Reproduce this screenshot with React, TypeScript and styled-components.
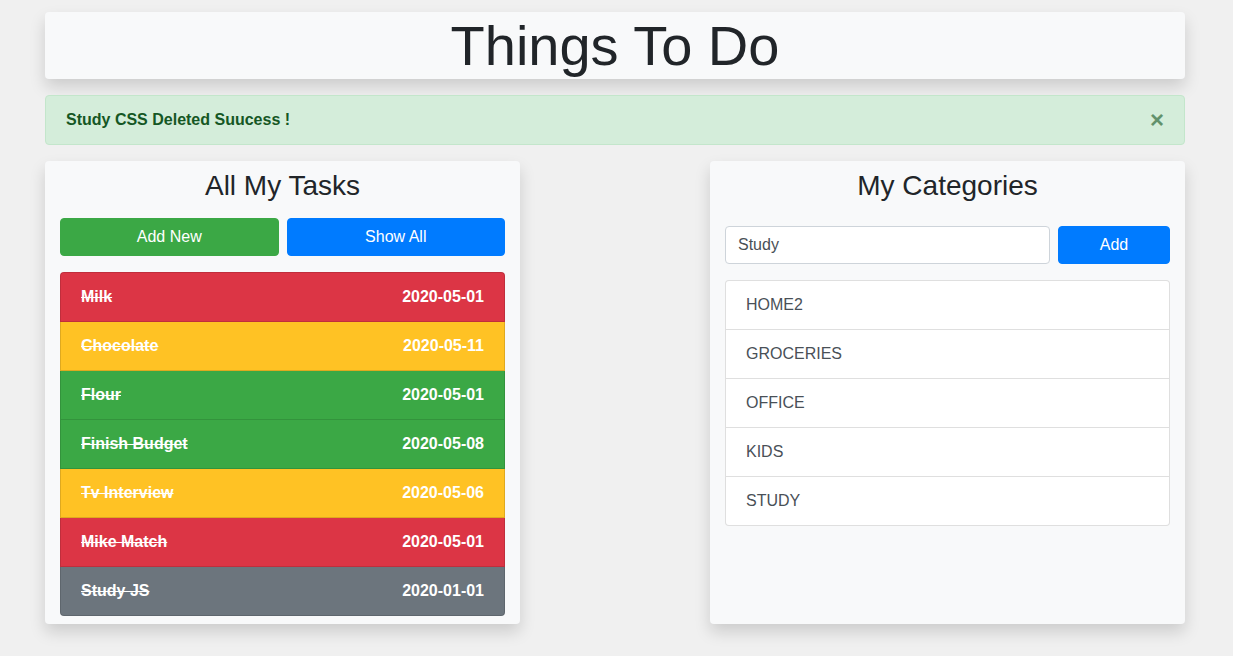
import * as React from 'react';
import styled, { createGlobalStyle } from 'styled-components';

const GlobalStyle = createGlobalStyle`
    * {
        box-sizing: border-box;
    }

    body {
        margin: 0;
        background: #f0f0f0;
        font-family: "Liberation Sans", Arial, Helvetica, sans-serif;
        font-size: 16px;
        line-height: 1.5;
        color: #212529;
    }
`;

const Page = styled.div`
    width: 1140px;
    margin: 12px 0 32px 45px;
    display: flex;
    flex-direction: column;
    gap: 16px;
`;

const Header = styled.header`
    background: #f8f9fa;
    border-radius: 4px;
    box-shadow: 0 8px 16px rgba(0, 0, 0, 0.15);
`;

const Title = styled.h1`
    margin: 0;
    font-size: 56px;
    font-weight: 400;
    line-height: 1.2;
    text-align: center;
`;

const Alert = styled.div`
    position: relative;
    padding: 12px 64px 12px 20px;
    background: #d4edda;
    border: 1px solid #c3e6cb;
    border-radius: 4px;
    color: #155724;
    font-weight: 700;
`;

const Close = styled.button`
    position: absolute;
    top: 0;
    right: 0;
    padding: 12px 20px;
    border: 0;
    background: transparent;
    font-family: inherit;
    font-size: 24px;
    font-weight: 700;
    line-height: 1;
    color: #155724;
    opacity: 0.6;
    cursor: pointer;
`;

const Columns = styled.div`
    display: flex;
    justify-content: space-between;
    align-items: stretch;
`;

const Card = styled.section`
    width: 475px;
    min-height: 463px;
    padding: 8px 15px;
    background: #f8f9fa;
    border-radius: 4px;
    box-shadow: 0 8px 16px rgba(0, 0, 0, 0.15);
    display: flex;
    flex-direction: column;
`;

const CardTitle = styled.h3<{ $gap: number }>`
    margin: 0 0 ${(p) => p.$gap}px;
    font-size: 28px;
    font-weight: 400;
    line-height: 1.2;
    text-align: center;
`;

const ButtonRow = styled.div`
    display: flex;
    gap: 8px;
    margin-bottom: 16px;
`;

const Button = styled.button<{ $color: string; $width?: number }>`
    flex: ${(p) => (p.$width ? `0 0 ${p.$width}px` : '1')};
    height: 38px;
    padding: 6px 12px;
    border: 1px solid ${(p) => p.$color};
    border-radius: 4px;
    background: ${(p) => p.$color};
    color: #fff;
    font-family: inherit;
    font-size: 16px;
    line-height: 1.5;
    cursor: pointer;
`;

const List = styled.ul`
    margin: 0;
    padding: 0;
    list-style: none;
    display: flex;
    flex-direction: column;
`;

const TaskItem = styled.li<{ $bg: string }>`
    display: flex;
    justify-content: space-between;
    padding: 12px 20px;
    background: ${(p) => p.$bg};
    border: 1px solid rgba(0, 0, 0, 0.125);
    color: #fff;
    font-weight: 700;

    & + & {
        border-top-width: 0;
    }

    &:first-child {
        border-radius: 4px 4px 0 0;
    }

    &:last-child {
        border-radius: 0 0 4px 4px;
    }
`;

const TaskName = styled.span`
    text-decoration: line-through;
`;

const InputRow = styled.form`
    display: flex;
    gap: 8px;
    margin-bottom: 16px;
`;

const Input = styled.input`
    flex: 1;
    height: 38px;
    padding: 6px 12px;
    border: 1px solid #ced4da;
    border-radius: 4px;
    background: #fff;
    color: #495057;
    font-family: inherit;
    font-size: 16px;
`;

const CategoryItem = styled.li`
    padding: 12px 20px;
    background: #fff;
    border: 1px solid rgba(0, 0, 0, 0.125);
    color: #495057;

    & + & {
        border-top-width: 0;
    }

    &:first-child {
        border-radius: 4px 4px 0 0;
    }

    &:last-child {
        border-radius: 0 0 4px 4px;
    }
`;

const colors = {
    danger: '#dc3545',
    warning: '#ffc224',
    success: '#3ba845',
    secondary: '#6c757d',
    primary: '#007bff',
};

const tasks = [
    { name: 'Milk', date: '2020-05-01', color: colors.danger },
    { name: 'Chocolate', date: '2020-05-11', color: colors.warning },
    { name: 'Flour', date: '2020-05-01', color: colors.success },
    { name: 'Finish Budget', date: '2020-05-08', color: colors.success },
    { name: 'Tv Interview', date: '2020-05-06', color: colors.warning },
    { name: 'Mike Match', date: '2020-05-01', color: colors.danger },
    { name: 'Study JS', date: '2020-01-01', color: colors.secondary },
];

const categories = ['HOME2', 'GROCERIES', 'OFFICE', 'KIDS', 'STUDY'];

export default function App(): JSX.Element {
    const [category, setCategory] = React.useState('Study');

    return (
        <>
            <GlobalStyle />
            <Page>
                <Header>
                    <Title>Things To Do</Title>
                </Header>
                <Alert>
                    Study CSS Deleted Suucess !
                    <Close type="button" aria-label="Close">
                        &times;
                    </Close>
                </Alert>
                <Columns>
                    <Card>
                        <CardTitle $gap={15}>All My Tasks</CardTitle>
                        <ButtonRow>
                            <Button $color={colors.success}>Add New</Button>
                            <Button $color={colors.primary}>Show All</Button>
                        </ButtonRow>
                        <List>
                            {tasks.map((task) => (
                                <TaskItem key={task.name} $bg={task.color}>
                                    <TaskName>{task.name}</TaskName>
                                    <span>{task.date}</span>
                                </TaskItem>
                            ))}
                        </List>
                    </Card>
                    <Card>
                        <CardTitle $gap={23}>My Categories</CardTitle>
                        <InputRow onSubmit={(e) => e.preventDefault()}>
                            <Input
                                value={category}
                                onChange={(e) => setCategory(e.target.value)}
                            />
                            <Button type="submit" $color={colors.primary} $width={112}>
                                Add
                            </Button>
                        </InputRow>
                        <List>
                            {categories.map((c) => (
                                <CategoryItem key={c}>{c}</CategoryItem>
                            ))}
                        </List>
                    </Card>
                </Columns>
            </Page>
        </>
    );
}
